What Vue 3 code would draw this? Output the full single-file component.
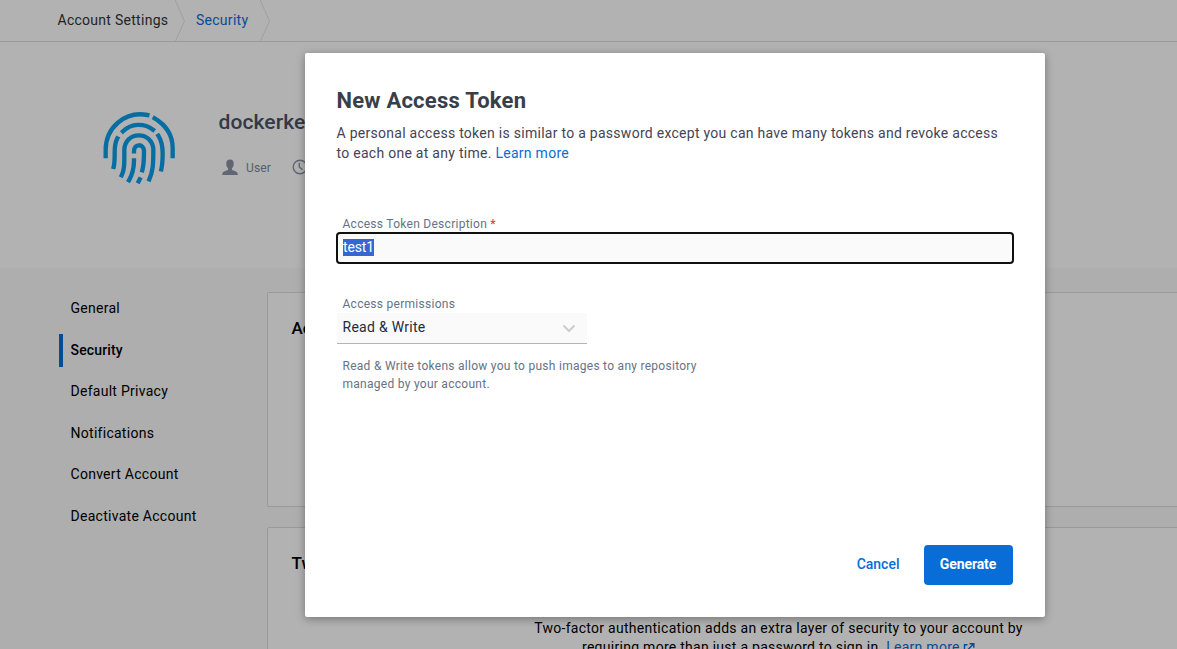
<script setup>
const links = ['General', 'Security', 'Default Privacy', 'Notifications', 'Convert Account', 'Deactivate Account']
</script>

<template>
  <div class="page">
    <nav class="crumbs">
      <span class="crumb">Account Settings</span>
      <svg class="sep" width="11" height="41" viewBox="0 0 11 41"><path d="M.5 0V1L9.500 21L.5 41" /></svg>
      <a class="crumb current">Security</a>
      <svg class="sep" width="11" height="41" viewBox="0 0 11 41"><path d="M.5 0V1L9.500 21L.5 41" /></svg>
    </nav>

    <header class="profile">
      <svg class="avatar" width="78" height="78" viewBox="30 27 234 234">
        <path d="M47 168V150C47 83 105 32 172 45" />
        <path d="M194 55C230 76 248 108 248 145V168" />
        <path d="M99 94C124 69 163 69 189 89" />
        <path d="M82 115C73 132 74 145 74 164C74 181 74 188 71 201" />
        <path d="M205 107C217 126 218 140 218 160C218 182 217 194 214 208" />
        <path d="M95 226C104 207 103 190 103 151C103 91 190 91 190 151C190 193 189 213 178 238" />
        <path d="M132 154C132 130 162 130 162 153C162 181 162 193 157 211" />
        <path d="M132 181C132 211 127 224 117 241" />
        <path d="M149 238L146 244" />
      </svg>
      <div class="identity">
        <h1>dockerkey</h1>
        <div class="meta">
          <svg width="16" height="17" viewBox="0 0 16 17"><path fill="#8a93a4" d="M8 .5C5.300.5 4 2.400 4.300 5c0 2 .7 3.500 1.800 4.400v1.400C4.500 12 1 12.300.5 14L.2 16h15.600l-.3-2c-.5-1.700-4-2-5.600-3.200V9.400C11 8.500 11.700 7 11.700 5 12 2.400 10.700.5 8 .5Z" /></svg>
          <span>User</span>
          <svg width="16" height="16" viewBox="0 0 16 16" fill="none" stroke="#8a93a4" stroke-width="1.400"><circle cx="8" cy="8" r="6.800" /><path d="M7.300 3.800V8l3.200 2.700" /></svg>
        </div>
      </div>
    </header>

    <div class="content">
      <aside>
        <a v-for="link in links" :key="link" :class="{ active: link === 'Security' }">{{ link }}</a>
      </aside>
      <main>
        <section class="card tokens"><h2>Access Tokens</h2></section>
        <section class="card factor">
          <h2>Two-Factor Authentication</h2>
          <p>Two-factor authentication adds an extra layer of security to your account by<br />requiring more than just a password to sign in. <a>Learn more
            <svg class="ext" width="12" height="12" viewBox="0 0 12 12" fill="none" stroke="currentColor" stroke-width="1.400"><path d="M4.500 2.700H1.500V10.500H9.500V7.500M6.500 1.700H10.800V5.700M10.500 2L5 7.500" /></svg></a></p>
        </section>
      </main>
    </div>

    <div class="overlay">
      <div class="modal">
        <h3>New Access Token</h3>
        <p class="intro">A personal access token is similar to a password except you can have many tokens and revoke access<br />to each one at any time. <a>Learn more</a></p>
        <div class="label desc">Access Token Description <b>*</b></div>
        <div class="input"><span>test1</span></div>
        <div class="label perm">Access permissions</div>
        <div class="select">
          <span>Read &amp; Write</span>
          <svg width="14" height="9" viewBox="0 0 14 9"><path d="M1.500 1.500L7 7L12.500 1.500" fill="none" stroke="#ccc" stroke-width="2" /></svg>
        </div>
        <p class="hint">Read &amp; Write tokens allow you to push images to any repository<br />managed by your account.</p>
        <footer>
          <button class="cancel">Cancel</button>
          <button class="generate">Generate</button>
        </footer>
      </div>
    </div>
  </div>
</template>

<style scoped>
.page { position: relative; width: 1177px; height: 649px; overflow: hidden; background: #f9f9f9; font: 14px/20px Roboto, sans-serif; letter-spacing: .275px; color: #000; }
h1, h2, h3, p { margin: 0; }
a { color: #086dd7; }
.crumbs { display: flex; height: 41px; padding-left: 57.500px; border-bottom: 1px solid #dcdcdc; background: #fff; }
.crumb { line-height: 40px; color: #333; }
.crumb.current { color: #086dd7; margin-left: 10px; }
.sep { margin-left: 6.700px; fill: none; stroke: #e4e4e4; }
.current + .sep { margin-left: 11.500px; }
.profile { display: flex; height: 226px; background: #fff; }
.avatar { flex: none; margin: 67px 0 0 100px; fill: none; stroke: #0b9eea; stroke-width: 13; stroke-linecap: square; }
.identity { margin: 67px 0 0 40.500px; }
h1 { font-size: 21px; line-height: 26px; font-weight: 500; color: #4a5263; letter-spacing: .1px; }
.meta { display: flex; align-items: center; margin: 21px 0 0 3.500px; font-size: 12px; color: #7d889a; }
.meta span { margin: 2px 21px 0 8px; letter-spacing: .1px; }
.content { display: flex; }
aside { flex: none; width: 208px; padding: 24px 0 0 59px; }
aside a { display: block; height: 33px; margin-bottom: 8.600px; line-height: 32px; padding-left: 7.500px; border-left: 4px solid transparent; color: #000; }
aside a.active { border-color: #086dd7; font-weight: 500; letter-spacing: .15px; }
main { flex: none; width: 1021px; padding-top: 24px; }
.card { box-sizing: border-box; background: #fff; border: 1px solid #dcdcdc; border-radius: 2px; padding: 24px 23.500px; }
.tokens { height: 215px; margin-bottom: 20px; }
.factor { height: 200px; }
h2 { font-size: 17px; line-height: 22px; font-weight: 500; letter-spacing: 0; }
.factor p { margin-top: 45px; padding-left: 2px; line-height: 19px; text-align: center; }
.ext { position: relative; top: 2px; margin-left: -.5px; }
.overlay { position: absolute; inset: 0; background: rgba(0, 0, 0, .3); display: flex; align-items: flex-start; padding: 53px 0 0 305px; }
.modal { box-sizing: border-box; width: 740px; height: 564px; padding: 34px 32px 32px; background: #fff; border-radius: 2px; box-shadow: 0 2px 8px rgba(0, 0, 0, .35); display: flex; flex-direction: column; }
h3 { font-size: 22px; line-height: 28px; font-weight: 700; color: #393f49; letter-spacing: .24px; margin-left: -.6px; }
.intro { margin: 8px 0 0 -.5px; color: #445; }
.label { font-size: 12px; line-height: 16px; color: #677285; padding-left: 5.500px; }
.desc { margin-top: 53px; }
.label b { color: #dd4250; font-weight: 500; }
.input { box-sizing: border-box; width: 678px; height: 32px; margin: 0 0 0 -1px; padding: 0 5px; border: 2px solid #101010; border-radius: 4px; background: #fafafa; display: flex; align-items: flex-start; }
.input span { margin-top: 5px; height: 17px; line-height: 16px; background: #3367d1; color: #fff; letter-spacing: -.15px; }
.perm { margin-top: 32px; }
.select { box-sizing: border-box; width: 250px; height: 31px; margin-top: 1px; padding: 0 11px 0 5.500px; border-bottom: 1px solid #b5b5b5; background: #fafafa; display: flex; align-items: center; justify-content: space-between; color: #222c3a; }
.select span { margin-bottom: 2px; }
.hint { margin: 13px 0 0 5.500px; font-size: 12px; line-height: 18px; color: #677285; }
footer { display: flex; justify-content: flex-end; align-items: center; margin-top: auto; gap: 24.500px; }
button { padding: 0; border: 0; font: 500 14px/38px Roboto, sans-serif; background: none; }
.cancel { color: #086dd7; letter-spacing: 0; padding-bottom: 2px; }
.generate { width: 89px; height: 40px; padding: 0 1px 2px 0; color: #fff; background: #086dd7; border-radius: 4px; font-weight: 700; letter-spacing: -.1px; }
</style>
